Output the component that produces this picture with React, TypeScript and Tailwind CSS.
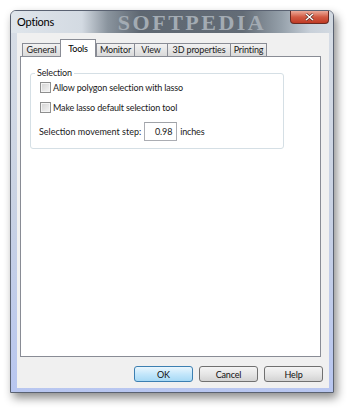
import React from 'react';

const TABS = [
  { label: 'General', w: 'w-[38px]' },
  { label: 'Tools', w: 'w-[36px]', active: true },
  { label: 'Monitor', w: 'w-[38px]' },
  { label: 'View', w: 'w-[33px]' },
  { label: '3D properties', w: 'w-[63px]' },
  { label: 'Printing', w: 'w-[37px]' },
];

function CheckBox({ label }: { label: string }) {
  return (
    <label className="flex h-[11px] items-center gap-[2px]">
      <span className="box-border h-[11px] w-[11px] border border-[#8e8f8f] bg-gradient-to-br from-[#d2d2d2] to-[#f6f6f6] shadow-[inset_0_0_0_1px_#f4f4f4]" />
      <span>{label}</span>
    </label>
  );
}

function Button({ label, primary }: { label: string; primary?: boolean }) {
  return (
    <button
      className={
        primary
          ? 'box-border h-[16px] w-[59px] rounded-[3px] border border-[#3c7fb1] bg-gradient-to-b from-[#eaf6fd] via-[#c4e7fb] to-[#a7d9f5] leading-none text-[#111]'
          : 'box-border h-[16px] w-[59px] rounded-[3px] border border-[#707070] bg-gradient-to-b from-[#f4f4f4] via-[#e6e6e6] to-[#d3d3d3] leading-none text-[#111]'
      }
    >
      {label}
    </button>
  );
}

export default function App() {
  return (
    <div className="h-[411px] w-[350px] overflow-hidden bg-white pl-[10px] pt-[10px] font-['Lato',sans-serif] text-[9px] tracking-[-0.15px] text-[#1a1a1a]">
      {/* Window */}
      <div className="box-border flex h-[383px] w-[324px] flex-col rounded-t-[6px] border border-[#5a6272] bg-gradient-to-b from-[#d8dee6] via-[#c9d2e3] to-[#b8c6f0] shadow-[3px_5px_10px_rgba(0,0,0,0.45)]">
        {/* Title bar */}
        <div className="flex h-[22px] items-stretch rounded-t-[5px] bg-[linear-gradient(to_right,#dfe5eb_0%,#d3dae2_22%,#8a949e_30%,#5f6872_40%,#636c76_72%,#95a0aa_84%,#c8d0d9_93%,#d3dae2_100%)]">
          <span className="flex items-center pl-[6px] text-[11px] tracking-[-0.2px] text-black">Options</span>
          <div className="flex flex-1 items-center justify-center pl-[40px] pt-[1px]">
            <span className="font-['Liberation_Serif',serif] text-[22px] font-bold leading-none tracking-[2.5px] text-[#a3abb3]">
              SOFTPEDIA
            </span>
          </div>
          <div className="mr-[4px] flex h-[13px] w-[39px] items-center justify-center rounded-b-[4px] border border-t-0 border-[#6a2a22] bg-gradient-to-b from-[#eba999] via-[#d25a43] to-[#c03a24]">
            <svg width="9" height="8" viewBox="0 0 9 8">
              <path d="M1 1 L8 7 M8 1 L1 7" stroke="#4a1d16" strokeWidth="2.6" />
              <path d="M1 1 L8 7 M8 1 L1 7" stroke="#ffffff" strokeWidth="1.6" />
            </svg>
          </div>
        </div>

        {/* Client area */}
        <div className="ml-[6px] mr-[4px] flex h-[355px] flex-col bg-[#f0f0f0] pl-[3px] pr-[8px] pt-[6px]">
          {/* Tabs */}
          <div className="relative z-10 flex h-[17px] items-end pl-[2px]">
            {TABS.map((t) =>
              t.active ? (
                <div
                  key={t.label}
                  className={`${t.w} -mb-px box-border flex h-[18px] items-start justify-center border-x border-t border-[#898c95] bg-white pt-[2px] text-black`}
                >
                  {t.label}
                </div>
              ) : (
                <div
                  key={t.label}
                  className={`${t.w} box-border flex h-[13px] items-center justify-center border-l border-t border-[#898c95] bg-gradient-to-b from-[#f2f2f2] to-[#dadada] last:border-r`}
                >
                  {t.label}
                </div>
              )
            )}
          </div>

          {/* Tab panel */}
          <div className="box-border h-[301px] border border-[#898c95] bg-white pl-[9px] pt-[10px]">
            <fieldset className="box-border w-[254px] rounded-[3px] border border-[#d5dfe5] pb-[7px] pl-[9px]">
              <legend className="-ml-[5px] px-[2px] leading-[12px]">Selection</legend>
              <div className="flex flex-col gap-[9px] pt-[3px]">
                <CheckBox label="Allow polygon selection with lasso" />
                <CheckBox label="Make lasso default selection tool" />
                <div className="-ml-px flex items-center gap-[3px]">
                  <span className="tracking-[0px]">Selection movement step:</span>
                  <div className="box-border flex h-[19px] w-[33px] items-center justify-end border border-[#abadb3] border-t-[#a0a3a8] bg-white pr-[4px]">
                    0.98
                  </div>
                  <span>inches</span>
                </div>
              </div>
            </fieldset>
          </div>

          {/* Buttons */}
          <div className="-mr-[2px] mt-[9px] flex justify-end gap-[6px]">
            <Button label="OK" primary />
            <Button label="Cancel" />
            <Button label="Help" />
          </div>
        </div>
      </div>
    </div>
  );
}
